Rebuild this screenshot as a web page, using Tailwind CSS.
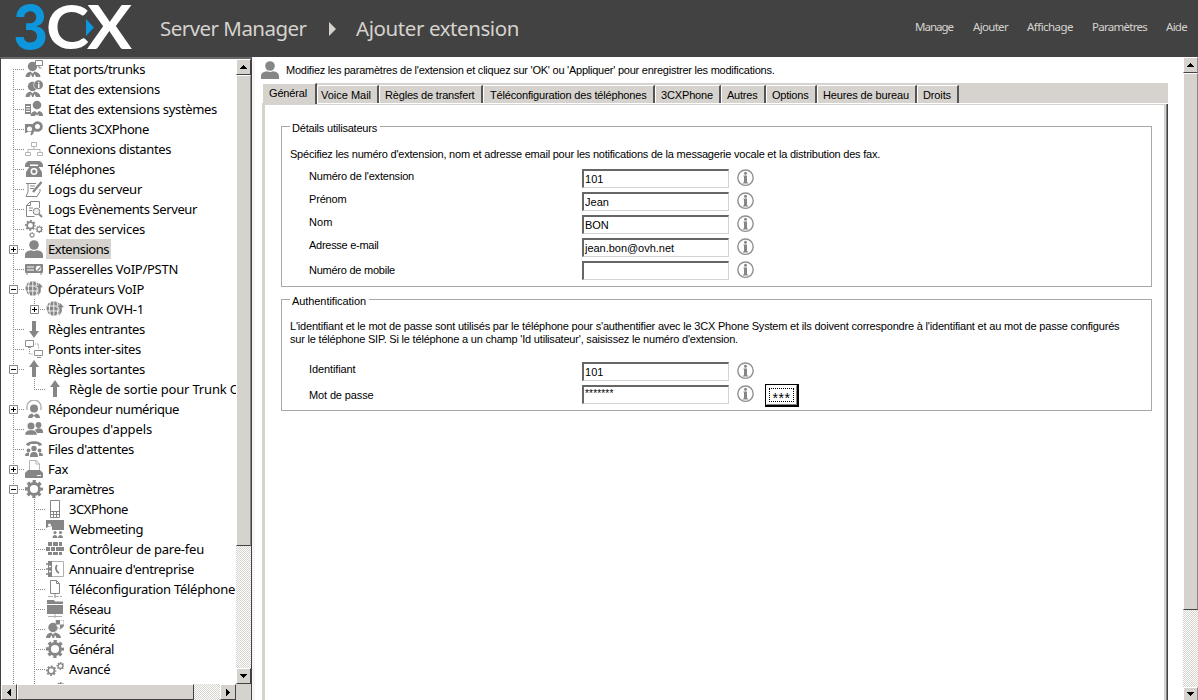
<!DOCTYPE html>
<html lang="fr">
<head>
<meta charset="utf-8">
<title>3CX Server Manager</title>
<script src="https://cdn.jsdelivr.net/npm/@tailwindcss/browser@4"></script>
</head>
<body class="h-[700px] w-[1198px] overflow-hidden bg-white font-['Liberation_Sans',sans-serif] text-[11px] text-black">

<svg class="hidden">
  <defs>
    <g id="bust"><circle cx="9" cy="5" r="4.800"/><path d="M0 18v-3c0-3 3-4.500 6-4.800q3 1.500 6 0c3 .3 6 1.800 6 4.800v3z"/></g>
    <g id="suit"><circle cx="7.500" cy="6.500" r="4.700"/><path d="M.5 17c0-3 2-5 5-5.500l2 2 2-2c3 .5 6 2.500 6 5.500h-4.500l-1.500-3-1 3h-1.500l-1-3-1.500 3z"/></g>
    <g id="ports"><use href="#suit"/><path d="M10.500.5h7v5h-7zM14 6v2h2.500" fill="#fff" stroke="#868686"/></g>
    <g id="extstate"><use href="#suit"/><circle cx="13.500" cy="4.800" r="4.800" stroke="#fff" stroke-width=".6"/><path d="M13 2h1.500v1.200H13zM13 4h1.500v4H13z" fill="#fff"/></g>
    <g id="sysext"><circle cx="12" cy="5" r="4.300"/><path d="M5.500 16c0-3 2-4 4.500-5l2 2 2-2c3 1 4 2 4 5h-4l-1-2-1 2-1-2-1 2z"/><path d="M0 4h6v10H0z"/><path d="M1 6.500h4M1 9h4M1 11.500h4" stroke="#fff"/></g>
    <g id="client"><path d="M0 4h8v9H0z"/><circle cx="4.500" cy="9" r="2.500" fill="#fff"/><path d="M1 14c0-3 6-3 6 0z" fill="#fff"/><circle cx="12.500" cy="6.500" r="3.900" fill="#fff" stroke="#868686" stroke-width="2.800"/><path d="M9.500 9.500L6 15" stroke="#868686" stroke-width="2"/></g>
    <g id="net" fill="none" stroke="#b4b4b4"><path d="M6.500 2.500h5v4h-5zM.5 12.500h5v3h-5zM12.500 12.500h5v3h-5zM9 6.500v3M3 12V9.500h12V12"/></g>
    <g id="phone"><path d="M0 6c0-3 2-5 5-5h8c3 0 5 2 5 5v1h-5V4.500H5V7H0z"/><path d="M5 6h8l4 6v5H1v-5z"/><circle cx="9" cy="11.500" r="2.700" stroke="#fff" stroke-width="1.500"/></g>
    <g id="log" fill="none" stroke="#868686"><path d="M1 3.500h10M3 3v9l-2 4.500h11l3-5V9M5 6h5M5 8.500h4"/><path d="M16.500 2L8 12" stroke-width="2.400"/></g>
    <g id="find" fill="none" stroke="#868686"><path d="M5.500 1.500h9V8M5.500 1.500l-4 4V16.500h8M5.500 2v3.500h-4M4 8h4M4 10.500h3"/><circle cx="11.500" cy="11.500" r="3.300" fill="#eee"/><path d="M14 14l3 3" stroke-width="2"/></g>
    <g id="gear" fill="none" stroke="#868686"><circle cx="9" cy="9" r="5.500" stroke-width="2.800"/><circle cx="9" cy="9" r="7.600" stroke-width="2.800" stroke-dasharray="3.200 2.770" stroke-dashoffset="1.600"/></g>
    <g id="gears"><use href="#gear" transform="scale(.6)"/><use href="#gear" transform="translate(10.500 5.500) scale(.42)"/><use href="#gear" transform="translate(4 12) scale(.34)"/></g>
    <g id="gears2"><use href="#gear" transform="translate(0 5.500) scale(.58)"/><use href="#gear" transform="translate(10.500 2) scale(.44)"/></g>
    <g id="gateway"><rect y="4" width="18" height="9" rx="1"/><path d="M1 14h2M15 14h2" stroke="#868686"/><path d="M2 7h7M2 10h7" stroke="#fff"/><circle cx="13.500" cy="8.500" r="2.700" fill="#fff"/><path d="M12.500 10.500l3-3" stroke="#868686" stroke-width="1.500"/></g>
    <g id="globe"><circle cx="7.800" cy="8.500" r="7.300"/><path d="M1 6h14M1 11h13M7.800 1v15M4.500 2c-1.500 4-1.500 9 0 13M11 2c1.500 4 1.500 9 0 13" stroke="#fff" fill="none" stroke-width=".9"/><path d="M10.500 7.500L14.500 3l4 4.500H16V12l-3 4V7.500z" stroke="#fff" stroke-width=".5"/></g>
    <g id="down"><path d="M7 1h4v10h3l-5 7-5-7h3z"/></g>
    <g id="up"><path d="M7 17h4V7h3L9 0 4 7h3z"/></g>
    <g id="bridge" fill="none" stroke="#909090"><path d="M.5.5h8v6h-8zM9.500 10.500h8v5h-8zM3 7.500h3M12 17.500h4"/><path d="M10 4h3.500v5M4.500 9v5H8" stroke-dasharray="1 1"/></g>
    <g id="ivr"><circle cx="9" cy="8.500" r="4"/><path d="M2 10V7a7 7 0 0 1 14 0v3" fill="none" stroke="#b0b0b0" stroke-width="1.400"/><path d="M3 18c0-3 2-4 4-4.500l2 2 2-2c2 .5 4 1.500 4 4.500h-4l-2-2-2 2z"/></g>
    <g id="group"><circle cx="13.500" cy="5" r="2.900"/><path d="M10 10c2-2.500 8-2.500 8 1.500v1.500h-6z"/><circle cx="6" cy="6" r="3.500"/><path d="M0 15c0-4 3-5 6-5s6 1 6 5z" stroke="#fff" stroke-width=".4"/></g>
    <g id="queue"><path d="M1 5c1-5 15-5 16 0l-3 1-1.500-2h-7L4 6z"/><circle cx="9" cy="8.500" r="2.700"/><circle cx="3.500" cy="10.500" r="1.900"/><circle cx="14.500" cy="10.500" r="1.900"/><path d="M5 17c0-4 1.500-5 4-5s4 1 4 5zM0 16c0-3 2-3.500 4-3v3zM18 16c0-3-2-3.500-4-3v3z"/></g>
    <g id="fax"><path d="M4.500.5h7l3 3.500v8h-10z" fill="#fff" stroke="#b4b4b4"/><path d="M11 .5V4h3.500" fill="none" stroke="#b4b4b4"/><path d="M3 10h12l3 3v4q0 1-1 1H1q-1 0-1-1v-4z"/><path d="M12 15.500h4" stroke="#fff"/></g>
    <g id="mobile"><path d="M4.500.5h9v17h-9z" fill="#fff" stroke="#868686"/><path d="M5 11.500h8M5 14.500h8M7.500 12v5M10.500 12v5" stroke="#868686"/></g>
    <g id="web"><path d="M0 0h18v10H6V6L0 8z"/><circle cx="3.500" cy="5" r="1.500" fill="#fff"/><path d="M1 9c0-3 4-3 4 0z" fill="#fff"/><circle cx="9" cy="12.500" r="1.600"/><circle cx="14.500" cy="12.500" r="1.600"/><path d="M6.500 18c0-4 5-4 5 0zM12 18c0-4 5-4 5 0z"/></g>
    <g id="wall"><path d="M2 2h4v4H2zM7 2h5v4H7zM13 2h3v4h-3zM0 7h4v4H0zM5 7h4v4H5zM10 7h8v4h-8zM2 12h4v3H2zM7 12h5v3H7zM13 12h3v3h-3z"/></g>
    <g id="book"><path d="M4.500 1.500h13v15h-13z" fill="#fff" stroke="#b0b0b0"/><path d="M2 1h4v16H2z"/><path d="M0 4h3M0 9h3M0 14h3" stroke="#868686" stroke-width="1.500"/><path d="M3 6.500h2M3 11.500h2" stroke="#fff" stroke-width="1.500"/><path d="M11 5c-2 3-1 6 2 8" fill="none" stroke="#868686" stroke-width="1.800"/></g>
    <g id="page" fill="none" stroke="#868686"><path d="M4.500.5h6l3 3v10h-9zM10.500.5v3h3M9 14v4"/><path d="M2 16.500h14" stroke="#b0b0b0" stroke-dasharray="5 1"/></g>
    <g id="folder"><path d="M1 0h7l1 1.500h8V4H1zM1 5h16v9H1z"/><path d="M9 14v4M2 16.500h14" stroke="#b0b0b0"/></g>
    <g id="secu"><use href="#suit" transform="translate(-.5 1)"/><path d="M10 0h8v4c0 3-2 4-4 5-2-1-4-2-4-5z" fill="#fff" stroke="#909090" stroke-width=".6"/><path d="M10 0h4v4.500h-4zM14 4.500h4c0 2-2 3.500-4 4.500z"/></g>
    <g id="info"><circle cx="9.500" cy="8.700" r="7.700" fill="#fff" stroke="#909090" stroke-width="1.400"/><circle cx="9.500" cy="4.300" r="1.500"/><path d="M7.500 6.500h3.500v7h1.200v1H6.800v-1H8v-6h-.5z"/></g>
  </defs>
</svg>

<header class="flex h-[57px] items-center bg-[#424242] font-['Noto_Sans',sans-serif] text-[#d6d3ce]">
  <svg class="h-[57px] w-[150px] shrink-0" viewBox="0 0 150 57">
    <text x="13" y="48.500" font-family="Inter" font-weight="700" font-size="61" fill="#0d96dc" textLength="35" lengthAdjust="spacingAndGlyphs">3</text>
    <text x="46" y="48.500" font-family="Lato" font-weight="700" font-size="61" fill="#fff" textLength="43" lengthAdjust="spacingAndGlyphs">C</text>
    <text x="87" y="48.500" font-family="Lato" font-weight="700" font-size="61" fill="#fff" textLength="45" lengthAdjust="spacingAndGlyphs">X</text>
    <path d="M86 19l8 8.500-8 8.500z" fill="#0d96dc"/>
  </svg>
  <div class="flex w-[765px] items-center pl-[10px] text-[20.500px] leading-[57px] whitespace-nowrap">
    <span class="w-[169px]"><span data-w="146.5">Server Manager</span></span>
    <svg class="h-[14px] w-[7px]" viewBox="0 0 7 14" fill="#d6d3ce"><path d="M0 0l7 7-7 7z"/></svg>
    <span class="pl-[20px]"><span data-w="163">Ajouter extension</span></span>
  </div>
  <nav class="flex pb-[3px] text-[11.500px] whitespace-nowrap">
    <a class="w-[58px]"><span data-w="38">Manage</span></a>
    <a class="w-[54px]"><span data-w="35">Ajouter</span></a>
    <a class="w-[65px]"><span data-w="46">Affichage</span></a>
    <a class="w-[74px]"><span data-w="55">Paramètres</span></a>
    <a><span data-w="21">Aide</span></a>
  </nav>
</header>

<div class="flex h-[643px]">
  <aside class="flex h-[643px] w-[252px] shrink-0 flex-col border-t-2 border-r border-l border-[#424242] border-t-[#6a6a6a]">
    <div class="flex h-[625px]">
      <div id="tree" class="h-[625px] w-[235px] overflow-hidden font-['Noto_Sans',sans-serif] text-[13px] whitespace-nowrap"></div>
      <div class="flex w-[15px] flex-col bg-[conic-gradient(#d6d3ce_25%,#fff_0_50%,#d6d3ce_0_75%,#fff_0)] bg-[length:2px_2px]">
        <div class="flex h-4 items-center justify-center border border-t-white border-r-[#424242] border-b-[#424242] border-l-white bg-[#d6d3ce]"><svg width="7" height="4" shape-rendering="crispEdges"><path d="M3.500 0L7 4H0z"/></svg></div>
        <div class="h-[471px] border border-t-white border-r-[#868686] border-b-[#424242] border-l-white bg-[#d6d3ce]"></div>
        <div class="mt-auto flex h-4 items-center justify-center border border-t-white border-r-[#424242] border-b-[#424242] border-l-white bg-[#d6d3ce]"><svg width="7" height="4" shape-rendering="crispEdges"><path d="M3.500 4L7 0H0z"/></svg></div>
      </div>
    </div>
    <div class="flex h-4 bg-[conic-gradient(#d6d3ce_25%,#fff_0_50%,#d6d3ce_0_75%,#fff_0)] bg-[length:2px_2px]">
      <div class="flex w-4 items-center justify-center border border-t-white border-r-[#424242] border-b-[#424242] border-l-white bg-[#d6d3ce]"><svg width="4" height="7" shape-rendering="crispEdges"><path d="M4 0v7L0 3.500z"/></svg></div>
      <div class="w-[177px] border border-t-white border-r-[#424242] border-b-[#424242] border-l-white bg-[#d6d3ce]"></div>
      <div class="ml-auto flex w-4 items-center justify-center border border-t-white border-r-[#424242] border-b-[#424242] border-l-white bg-[#d6d3ce]"><svg width="4" height="7" shape-rendering="crispEdges"><path d="M0 0v7l4-3.500z"/></svg></div>
      <div class="w-[15px] bg-[#d6d3ce]"></div>
    </div>
  </aside>
  <div class="w-[3px] bg-[#f7f5f5]"></div>

  <main class="flex w-[928px] flex-col pl-[6px] whitespace-nowrap">
    <div class="flex h-[26px] items-center">
      <svg class="h-[18px] w-[18px]" viewBox="0 0 18 18" fill="#868686"><use href="#bust"/></svg>
      <span class="pl-[7px]"><span data-w="488.5">Modifiez les paramètres de l'extension et cliquez sur 'OK' ou 'Appliquer' pour enregistrer les modifications.</span></span>
    </div>
    <div class="ml-px flex h-[20px] w-[906px] items-end bg-[#d6d3ce]">
      <div class="h-[20px] w-[55px] border-t border-r-2 border-l border-t-white border-r-[#555] border-l-white pl-[6px] leading-[18px]"><span data-w="38">Général</span></div>
      <div class="h-[18px] w-[62px] rounded-tl-[2px] border-t border-r-2 border-l border-t-white border-r-[#555] border-l-white pl-[3px] leading-[18px]"><span data-w="50">Voice Mail</span></div>
      <div class="h-[18px] w-[104px] rounded-tl-[2px] border-t border-r-2 border-l border-t-white border-r-[#555] border-l-white pl-[5px] leading-[18px]"><span data-w="89.5">Règles de transfert</span></div>
      <div class="h-[18px] w-[172px] rounded-tl-[2px] border-t border-r-2 border-l border-t-white border-r-[#555] border-l-white pl-[6px] leading-[18px]"><span data-w="156.5">Téléconfiguration des téléphones</span></div>
      <div class="h-[18px] w-[66px] rounded-tl-[2px] border-t border-r-2 border-l border-t-white border-r-[#555] border-l-white pl-[5px] leading-[18px]"><span data-w="52">3CXPhone</span></div>
      <div class="h-[18px] w-[45px] rounded-tl-[2px] border-t border-r-2 border-l border-t-white border-r-[#555] border-l-white pl-[5px] leading-[18px]"><span data-w="30.5">Autres</span></div>
      <div class="h-[18px] w-[51px] rounded-tl-[2px] border-t border-r-2 border-l border-t-white border-r-[#555] border-l-white pl-[5px] leading-[18px]"><span data-w="36.5">Options</span></div>
      <div class="h-[18px] w-[100px] rounded-tl-[2px] border-t border-r-2 border-l border-t-white border-r-[#555] border-l-white pl-[5px] leading-[18px]"><span data-w="86">Heures de bureau</span></div>
      <div class="h-[18px] w-[42px] rounded-tl-[2px] border-t border-r-2 border-l border-t-white border-r-[#555] border-l-white pl-[5px] leading-[18px]"><span data-w="28">Droits</span></div>
    </div>
    <div class="ml-px flex h-px w-[906px]"><div class="w-[53px] bg-[#d6d3ce]"></div><div class="w-[2px] bg-[#555]"></div></div>
    <div class="ml-px flex h-[596px] w-[906px]">
      <div class="w-[902px] border-t border-l-[3px] border-[#d6d3ce] pl-4">
        <fieldset class="mt-[15px] h-[167px] w-[871px] border border-[#a8a8a8] pl-[8px]">
          <legend class="h-[13px] pr-[3px] pl-[2px] leading-[16px]"><span data-w="85">Détails utilisateurs</span></legend>
          <p class="mt-[15px] leading-[13px]"><span data-w="590">Spécifiez les numéro d'extension, nom et adresse email pour les notifications de la messagerie vocale et la distribution des fax.</span></p>
          <div class="mt-[8px] flex h-[23px] pl-[19px]"><span class="w-[273px] leading-[15px]"><span data-w="105">Numéro de l'extension</span></span><div class="h-[19px] w-[147px] border-t-2 border-r border-b border-l-2 border-t-[#666] border-r-[#d6d3ce] border-b-[#d6d3ce] border-l-[#666] pl-px leading-[17px]"><span data-w="18.5">101</span></div><svg class="ml-[7px] h-[18px] w-[18px]" viewBox="0 0 18 18" fill="#868686"><use href="#info"/></svg></div>
          <div class="flex h-[23px] pl-[19px]"><span class="w-[273px] leading-[15px]"><span data-w="37.5">Prénom</span></span><div class="h-[19px] w-[147px] border-t-2 border-r border-b border-l-2 border-t-[#666] border-r-[#d6d3ce] border-b-[#d6d3ce] border-l-[#666] pl-px leading-[17px]"><span data-w="24">Jean</span></div><svg class="ml-[7px] h-[18px] w-[18px]" viewBox="0 0 18 18" fill="#868686"><use href="#info"/></svg></div>
          <div class="flex h-[23px] pl-[19px]"><span class="w-[273px] leading-[15px]"><span data-w="23.5">Nom</span></span><div class="h-[19px] w-[147px] border-t-2 border-r border-b border-l-2 border-t-[#666] border-r-[#d6d3ce] border-b-[#d6d3ce] border-l-[#666] pl-px leading-[17px]"><span data-w="23.5">BON</span></div><svg class="ml-[7px] h-[18px] w-[18px]" viewBox="0 0 18 18" fill="#868686"><use href="#info"/></svg></div>
          <div class="flex h-[23px] pl-[19px]"><span class="w-[273px] leading-[15px]"><span data-w="69.5">Adresse e-mail</span></span><div class="h-[19px] w-[147px] border-t-2 border-r border-b border-l-2 border-t-[#666] border-r-[#d6d3ce] border-b-[#d6d3ce] border-l-[#666] pl-px leading-[17px]"><span data-w="89">jean.bon@ovh.net</span></div><svg class="ml-[7px] h-[18px] w-[18px]" viewBox="0 0 18 18" fill="#868686"><use href="#info"/></svg></div>
          <div class="flex h-[23px] pl-[19px]"><span class="w-[273px] pt-[2px] leading-[15px]"><span data-w="86">Numéro de mobile</span></span><div class="h-[19px] w-[147px] border-t-2 border-r border-b border-l-2 border-t-[#666] border-r-[#d6d3ce] border-b-[#d6d3ce] border-l-[#666]"></div><svg class="ml-[7px] h-[18px] w-[18px]" viewBox="0 0 18 18" fill="#868686"><use href="#info"/></svg></div>
        </fieldset>
        <fieldset class="mt-[6px] h-[118px] w-[871px] border border-[#a8a8a8] pl-[8px]">
          <legend class="h-[13px] pr-[3px] pl-[2px] leading-[16px]"><span data-w="74">Authentification</span></legend>
          <p class="mt-[14px] leading-[13px]"><span data-w="829.5">L'identifiant et le mot de passe sont utilisés par le téléphone pour s'authentifier avec le 3CX Phone System et ils doivent correspondre à l'identifiant et au mot de passe configurés</span><br><span data-w="448">sur le téléphone SIP. Si le téléphone a un champ 'Id utilisateur', saisissez le numéro d'extension.</span></p>
          <div class="mt-[16px] flex h-[23px] pl-[19px]"><span class="w-[273px] leading-[15px]"><span data-w="46.5">Identifiant</span></span><div class="h-[19px] w-[147px] border-t-2 border-r border-b border-l-2 border-t-[#666] border-r-[#d6d3ce] border-b-[#d6d3ce] border-l-[#666] pl-px leading-[17px]"><span data-w="18.5">101</span></div><svg class="ml-[7px] h-[18px] w-[18px]" viewBox="0 0 18 18" fill="#868686"><use href="#info"/></svg></div>
          <div class="flex h-[23px] pl-[19px]"><span class="w-[273px] pt-[3px] leading-[15px]"><span data-w="64.5">Mot de passe</span></span><div class="h-[19px] w-[147px] border-t-2 border-r border-b border-l-2 border-t-[#666] border-r-[#d6d3ce] border-b-[#d6d3ce] border-l-[#666] pl-px text-[10px] leading-[13px]"><span data-w="28.5">*******</span></div><svg class="ml-[7px] h-[18px] w-[18px]" viewBox="0 0 18 18" fill="#868686"><use href="#info"/></svg>
            <button class="-mt-px ml-[11px] h-[23px] w-[34px] border-t border-r-2 border-b-2 border-l border-black bg-white"><span class="flex h-[20px] border border-t-white border-r-[#868686] border-b-[#868686] border-l-white p-[2px]"><span class="flex-1 border border-dotted border-black bg-white text-[14px] leading-[18px]"><span data-w="18">***</span></span></span></button></div>
        </fieldset>
      </div>
      <div class="h-full w-[2px] bg-[#d6d3ce]"></div>
      <div class="h-full w-px bg-[#868686]"></div>
      <div class="h-full w-px bg-[#424242]"></div>
    </div>
  </main>

  <div class="flex h-[643px] w-[15px] flex-col bg-[conic-gradient(#d6d3ce_25%,#fff_0_50%,#d6d3ce_0_75%,#fff_0)] bg-[length:2px_2px]">
    <div class="flex h-4 shrink-0 items-center justify-center border border-t-white border-r-[#868686] border-b-[#424242] border-l-white bg-[#d6d3ce]"><svg width="7" height="4" shape-rendering="crispEdges"><path d="M3.500 0L7 4H0z"/></svg></div>
    <div class="h-[537px] shrink-0 border border-t-white border-r-[#868686] border-b-[#424242] border-l-white bg-[#d6d3ce]"></div>
    <div class="mt-auto flex h-[13px] items-center justify-center border border-b-0 border-t-white border-r-[#868686] border-l-white bg-[#d6d3ce]"><svg width="7" height="4" shape-rendering="crispEdges"><path d="M3.500 4L7 0H0z"/></svg></div>
  </div>
</div>

<script>
  // [level, icon, label, label width, expander]
  const items = [
    [1,'ports','Etat ports/trunks',97],[1,'extstate','Etat des extensions',112],[1,'sysext','Etat des extensions systèmes',169],
    [1,'client','Clients 3CXPhone',101],[1,'net','Connexions distantes',123],[1,'phone','Téléphones',67],[1,'log','Logs du serveur',94],
    [1,'find','Logs Evènements Serveur',149],[1,'gears','Etat des services',97],[1,'bust','Extensions',61,'+'],[1,'gateway','Passerelles VoIP/PSTN',130],
    [1,'globe','Opérateurs VoIP',96,'-'],[2,'globe','Trunk OVH-1',75,'+'],[1,'down','Règles entrantes',97],[1,'bridge','Ponts inter-sites',93],
    [1,'up','Règles sortantes',97,'-'],[2,'up','Règle de sortie pour Trunk OVH-1',199],[1,'ivr','Répondeur numérique',131,'+'],
    [1,'group',"Groupes d'appels",104],[1,'queue',"Files d'attentes",86],[1,'fax','Fax',20,'+'],[1,'gear','Paramètres',66,'-'],
    [2,'mobile','3CXPhone',59],[2,'web','Webmeeting',74],[2,'wall','Contrôleur de pare-feu',135],[2,'book',"Annuaire d'entreprise",125],
    [2,'page','Téléconfiguration Téléphone',166],[2,'folder','Réseau',42],[2,'secu','Sécurité',46],[2,'gear','Général',45],[2,'gears2','Avancé',41],[2,'gears2','',0]
  ];
  const dots = 'stroke="#868686" stroke-dasharray="1 1"';
  document.getElementById('tree').innerHTML = items.map(([lv, icon, label, w, exp], i) => {
    const x = lv === 1 ? 12.5 : 33.5;
    const next = items[i + 1];
    const down = next && next[0] === 2 ? 20 : 10;
    let g = `<path d="M12.500 ${i ? 0 : 10}V20" ${dots}/><path d="M${x - 0.5} 10.500h12" ${dots}/>`;
    if (lv === 2) g += `<path d="M33.500 0V${down}" ${dots}/>`;
    if (exp) g += `<path d="M${x - 4} 6.500h8v8h-8z" fill="#fff" stroke="#868686"/><path d="M${x - 2.5} 10.500h5${exp === '+' ? 'M' + x + ' 8v5' : ''}" stroke="#000"/>`;
    return `<div class="flex h-5 items-center">
      <svg class="h-5 shrink-0 ${lv === 1 ? 'w-[24px]' : 'w-[45px]'}" fill="none">${g}</svg>
      <svg class="h-[18px] w-[18px] shrink-0" viewBox="0 0 18 18" fill="#868686"><use href="#${icon}"/></svg>
      ${label && `<span class="ml-[3px] h-5 pr-[2px] pl-[2px] leading-[20px] ${label === 'Extensions' ? 'bg-[#d6d3ce]' : ''}"><span data-w="${w}">${label}</span></span>`}</div>`;
  }).join('');
  function fit() {
    document.querySelectorAll('[data-w]').forEach(el => {
      const gap = parseFloat(el.style.letterSpacing) || 0;
      const width = el.getBoundingClientRect().width;
      el.style.letterSpacing = (gap + (+el.dataset.w - width) / el.textContent.length).toFixed(3) + 'px';
    });
  }
  fit();
  addEventListener('load', () => { fit(); requestAnimationFrame(fit); });
  document.fonts.ready.then(fit);
  [30, 100, 250].forEach(t => setTimeout(fit, t));
</script>
</body>
</html>
